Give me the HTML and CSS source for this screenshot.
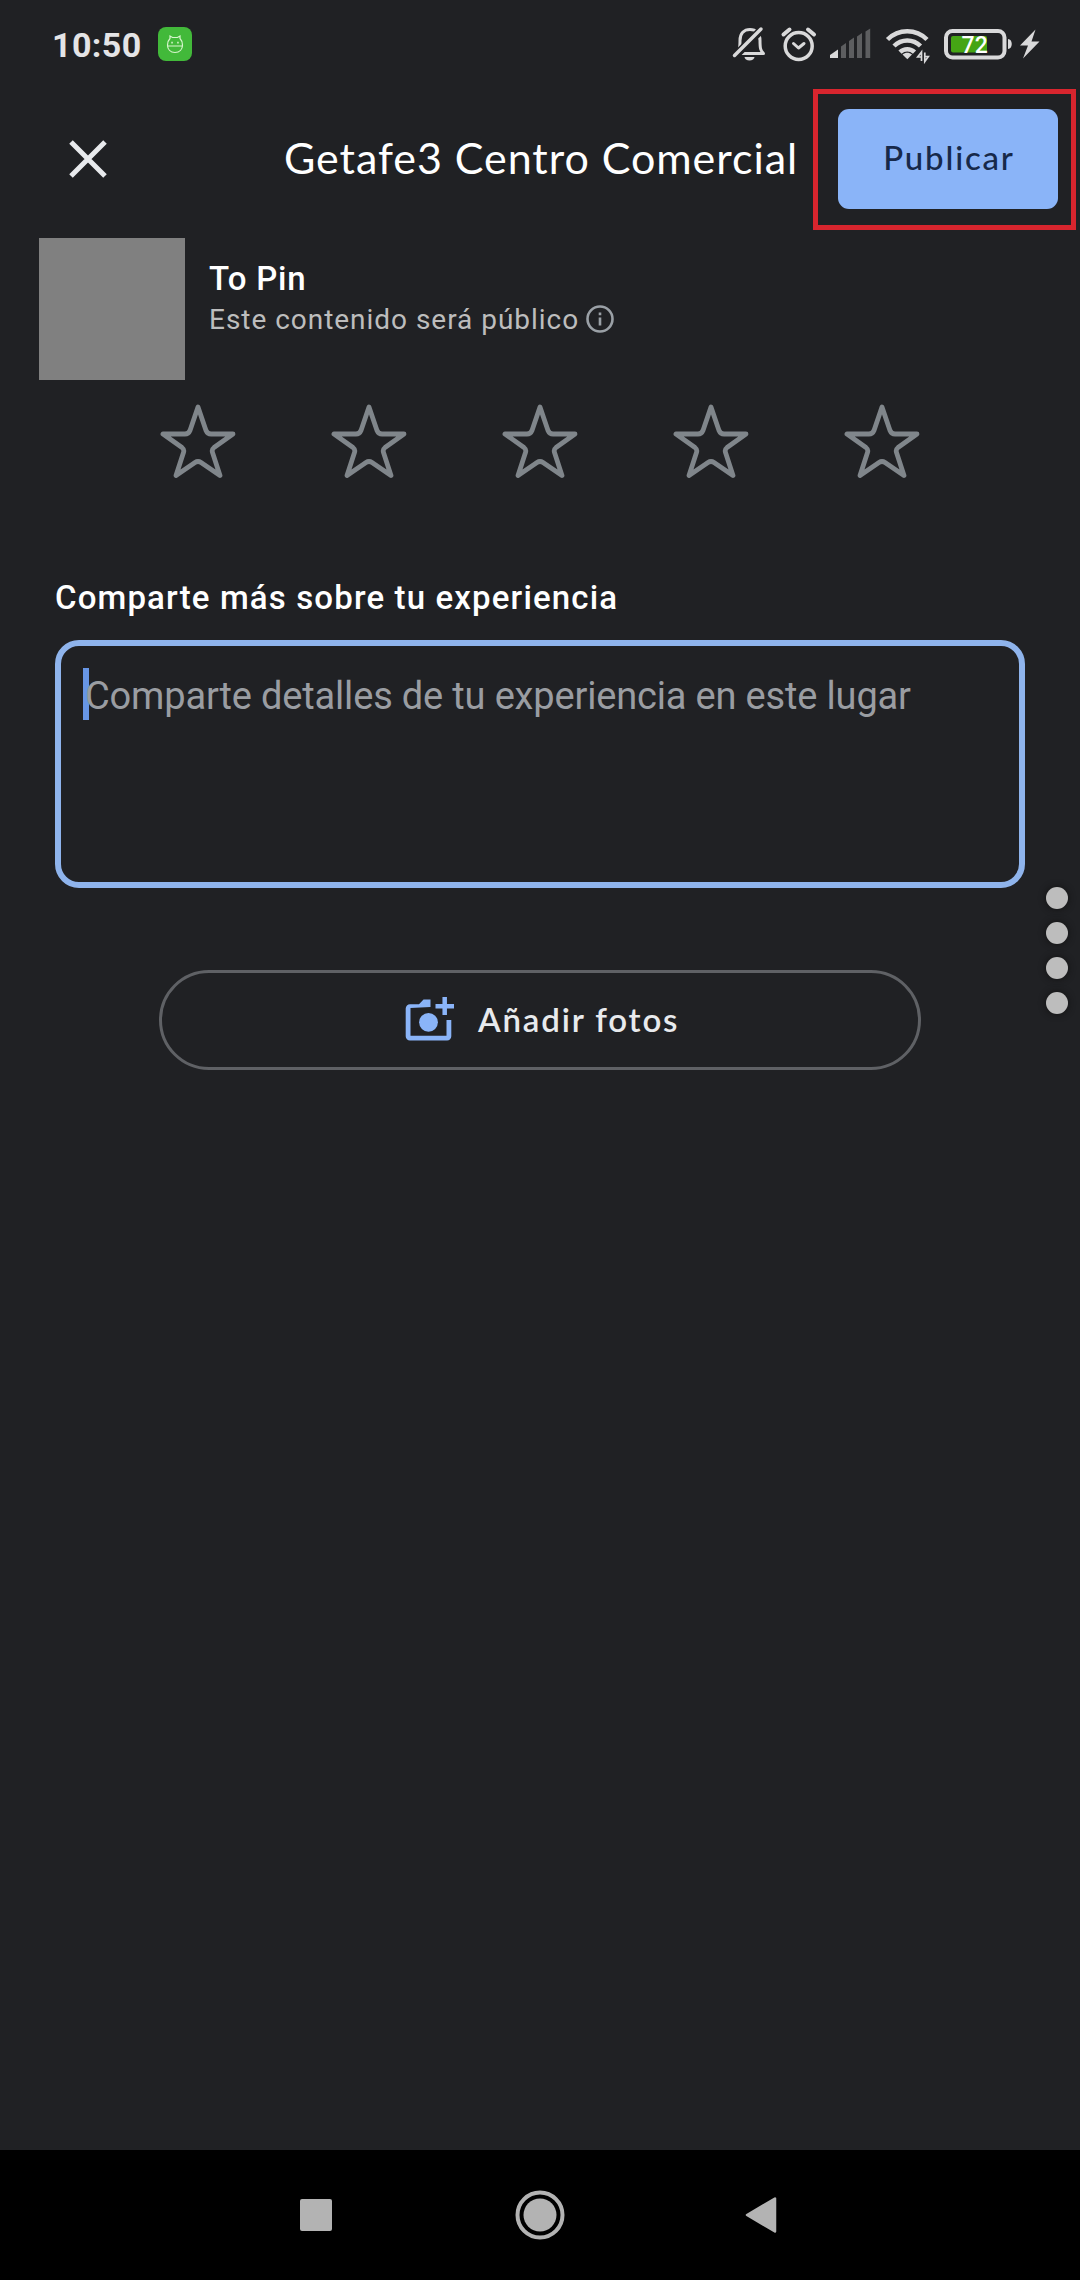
FILE: index.html
```html
<!DOCTYPE html>
<html lang="es">
<head>
<meta charset="utf-8">
<title>Getafe3 Centro Comercial</title>
<link rel="stylesheet" href="styles.css">
</head>
<body>
<div class="screen">
  <header class="status-bar">
    <span class="time">10:50</span>
    <svg class="app-badge" width="34" height="34" viewBox="0 0 34 34">
      <rect width="34" height="34" rx="8" fill="#42b93a"/>
      <path d="M9 19h16M9.500 18c0-3.500 1-5 2.500-6.500V9l2.500 1.500h5L22 9v2.500c1.500 1.500 2.500 3 2.500 6.500 0 4.500-3 7.500-7.500 7.500s-7.500-3-7.500-7.500z" fill="none" stroke="#d8f5ce" stroke-width="1.200"/>
      <path d="M13.300 15.700h1.500M19.200 15.700h1.500" stroke="#d8f5ce" stroke-width="1.700"/>
    </svg>
    <svg class="status-icons" width="310" height="40" viewBox="730 24 310 40" fill="none" stroke="#d9d9da">
      <g stroke-width="3">
        <path d="M735.500 53.500h28c-3-3-3.500-5-3.500-13 0-7-4-11-10-11s-10 4-10 11c0 8-.5 9-3.500 13" stroke-linejoin="round"/>
        <path d="M733.500 57.500L762.500 28.500" stroke="#202124" stroke-width="8"/>
        <path d="M734.500 55.500L761 29" stroke-width="3.500" stroke-linecap="round"/>
        <path d="M744.500 57h10a5 3.500 0 0 1-10 0z" fill="#d9d9da" stroke="none"/>
        <circle cx="798.700" cy="46" r="13.500" stroke-width="3.500"/>
        <path d="M793.500 43.500l5 4.500 5.500-4.500" stroke-linecap="round" stroke-linejoin="round"/>
        <path d="M783.500 34.500l6-5M814 34.500l-6-5" stroke-width="4" stroke-linecap="round"/>
      </g>
      <g stroke="none">
        <path d="M830 58v-3l8-5.500V58z" fill="#d9d9da"/>
        <path d="M841 58V46.500l5-3.500v15zM849 58V41l5-3.500V58zM857 58V36.500l5-3.500v25zM865.500 58V31.500l4.700-3V58z" fill="#5d5e60"/>
      </g>
      <g stroke-width="4.500">
        <path d="M887.500 39.500c11-11 28.500-11 39.500 0M894 46c7.500-7.500 19-7.500 26.500 0M900 52.200c4-4 10.500-4 14.500 0"/>
      </g>
      <path d="M902.500 54.500c3-2.300 6.500-2.300 9.500 0l-4.700 4.700z" fill="#d9d9da" stroke="none"/>
      <path d="M921.500 61v-9l-3.800 5h3.800M924.800 52.500V61.500l3.500-5h-3.500" stroke-width="1.700"/>
      <rect x="946" y="31" width="58.500" height="26.500" rx="6.500" stroke-width="4"/>
      <rect x="951" y="36" width="36" height="16.500" rx="2" fill="#45a514" stroke="none"/>
      <path d="M1008 39c5 0 5 10 0 10z" fill="#d9d9da" stroke="none"/>
      <text class="battery-level" x="974.700" y="53">72</text>
      <path d="M1035.500 29.500L1020 45.500h8l-5 13 16.500-17h-8z" fill="#d9d9da" stroke="none"/>
    </svg>
  </header>

  <div class="toolbar">
    <svg class="close" width="38" height="38" viewBox="0 0 38 38"><path d="M2 2l34 34M36 2L2 36" stroke="#e8eaed" stroke-width="5"/></svg>
    <h1 class="title">Getafe3 Centro Comercial</h1>
    <div class="highlight"><button class="publish">Publicar</button></div>
  </div>

  <section class="author">
    <div class="avatar"></div>
    <div class="author-text">
      <div class="name">To Pin</div>
      <div class="visibility"><span class="visibility-text">Este contenido será público</span>
        <svg width="28" height="28" viewBox="0 0 28 28"><circle cx="14" cy="14" r="12.500" fill="none" stroke="#9aa0a6" stroke-width="2.600"/><path d="M14 12.500v8M14 7.500v2.700" stroke="#9aa0a6" stroke-width="2.600"/></svg>
      </div>
    </div>
  </section>

  <svg width="0" height="0" class="defs"><symbol id="star" viewBox="0 0 76 76"><path d="M38 4L46 27.500Q47.500 31 51 31H73L54 44.500Q51.500 46.500 52.500 49.500L60 72.500L41 59.500Q38 57.500 35 59.500L16 72.500L23.500 49.500Q24.500 46.500 22 44.500L3 31H25Q28.500 31 30 27.500Z" fill="none" stroke="#80868b" stroke-width="4.800" stroke-linejoin="round"/></symbol></svg>
  <div class="stars">
    <svg class="star"><use href="#star"/></svg>
    <svg class="star"><use href="#star"/></svg>
    <svg class="star"><use href="#star"/></svg>
    <svg class="star"><use href="#star"/></svg>
    <svg class="star"><use href="#star"/></svg>
  </div>

  <main class="form">
    <h2 class="label">Comparte más sobre tu experiencia</h2>
    <div class="review-box">
      <div class="placeholder">Comparte detalles de tu experiencia en este lugar</div>
      <span class="caret"></span>
    </div>
    <button class="add-photos">
      <svg width="50" height="46" viewBox="405 996 50 46">
        <path d="M430.500 1007v-7.500h-7l-4.500 4.700h-9a4.300 4.300 0 0 0-4.300 4.300V1036a4.300 4.300 0 0 0 4.300 4.500h37a4.300 4.300 0 0 0 4.300-4.500v-16h-4.800v15.800h-36v-27.800z" fill="#8ab4f8"/>
        <circle cx="428.500" cy="1022.300" r="9.400" fill="#8ab4f8"/>
        <path d="M435.500 1006.200h18.500M444.700 997v18" stroke="#8ab4f8" stroke-width="4.500"/>
      </svg>
      <span class="add-text">Añadir fotos</span>
    </button>
  </main>

  <div class="edge-dots"><i></i><i></i><i></i><i></i></div>

  <nav class="nav-bar">
    <svg width="32" height="32"><rect width="32" height="32" rx="2" fill="#b3b3b3"/></svg>
    <svg width="50" height="50" viewBox="0 0 50 50"><circle cx="25" cy="25" r="22.500" fill="none" stroke="#b3b3b3" stroke-width="4"/><circle cx="25" cy="25" r="16.500" fill="#b3b3b3"/></svg>
    <svg width="32" height="38" viewBox="0 0 32 38"><path d="M2 19L30 2.500v33z" fill="#b3b3b3" stroke="#b3b3b3" stroke-width="2.500" stroke-linejoin="round"/></svg>
  </nav>
</div>
</body>
</html>
```
FILE: styles.css
```css
* { box-sizing: border-box; }
body { margin: 0; background: #202124; }
button { border: 0; padding: 0; margin: 0; }
svg { display: block; flex: none; }
h1, h2 { margin: 0; }
.defs { position: absolute; }

.screen {
  position: relative;
  display: flex;
  flex-direction: column;
  width: 1080px;
  height: 2280px;
  overflow: hidden;
  background: #202124;
  color: #fff;
  font-family: Roboto, "Noto Sans", sans-serif;
  white-space: nowrap;
}

.status-bar {
  display: flex;
  align-items: center;
  height: 88px;
  padding: 0 40px 0 52px;
}
.time { width: 106px; font-size: 34px; font-weight: 700; letter-spacing: 0.4px; color: #e4e4e6; line-height: 40px; padding-top: 2px; }
.status-icons { margin-left: auto; }
.battery-level { font-size: 23px; font-weight: 500; fill: #fff; stroke: none; text-anchor: middle; }

.toolbar {
  display: flex;
  align-items: center;
  height: 143px;
  padding: 0 4px 0 69px;
}
.close { margin-bottom: 2px; }
.title {
  width: 528px;
  margin: 0 0 4px 177px;
  font: 400 43px/56px Lato, sans-serif;
  letter-spacing: 0.95px;
}
.highlight {
  width: 263px;
  height: 141px;
  margin-left: auto;
  padding: 15px 13px 16px 20px;
  border: 5px solid #d8252e;
}
.publish {
  width: 220px;
  height: 100px;
  padding: 0 0 4px 2px;
  border-radius: 11px;
  background: #8ab4f8;
  color: #17294a;
  font: 500 33px/40px Lato, sans-serif;
  letter-spacing: 1.8px;
}

.author { display: flex; height: 149px; padding: 7px 0 0 39px; }
.avatar { width: 146px; height: 142px; background: #808080; }
.author-text { padding: 20px 0 0 24px; }
.name { font-size: 33px; line-height: 42px; font-weight: 500; letter-spacing: 0.8px; }
.visibility { display: flex; align-items: center; gap: 7px; height: 38px; color: #bdbdbd; font-size: 28px; }
.visibility-text { letter-spacing: 0.97px; }

.stars { display: flex; gap: 95px; padding: 23px 0 0 160px; }
.star { width: 76px; height: 76px; }

.form { display: flex; flex-direction: column; padding: 97px 55px 0; }
.label { font-size: 33px; line-height: 44px; font-weight: 500; letter-spacing: 1.14px; }
.review-box {
  position: relative;
  z-index: 0;
  height: 248px;
  margin-top: 20px;
  padding: 24px 24px 20px;
  border: 6px solid #8fb4ec;
  border-radius: 24px;
}
.placeholder { font-size: 38px; line-height: 52px; letter-spacing: -0.17px; color: #9a9da2; }
.caret { position: absolute; left: 22px; top: 22px; width: 6px; height: 52px; background: #6796e6; z-index: -1; }
.add-photos {
  display: flex;
  align-items: center;
  gap: 23px;
  width: 762px;
  height: 100px;
  margin: 82px 0 0 104px;
  padding: 0 0 2px 243px;
  border: 3px solid #5f6165;
  border-radius: 50px;
  background: none;
  color: #e8eaed;
  font: 600 33px/40px Lato, sans-serif;
}
.add-text { padding-bottom: 1px; letter-spacing: 1.85px; }

.edge-dots {
  position: absolute;
  left: 1045.5px;
  top: 887px;
  display: flex;
  flex-direction: column;
  gap: 13px;
}
.edge-dots i { width: 22px; height: 22px; border-radius: 50%; background: #bdbdbd; box-shadow: 0 0 7px #111; }

.nav-bar {
  display: flex;
  align-items: center;
  height: 130px;
  margin-top: auto;
  padding: 0 303px 0 300px;
  justify-content: space-between;
  background: #000;
}
.nav-bar svg:nth-child(2) { margin-left: 3px; }
```
